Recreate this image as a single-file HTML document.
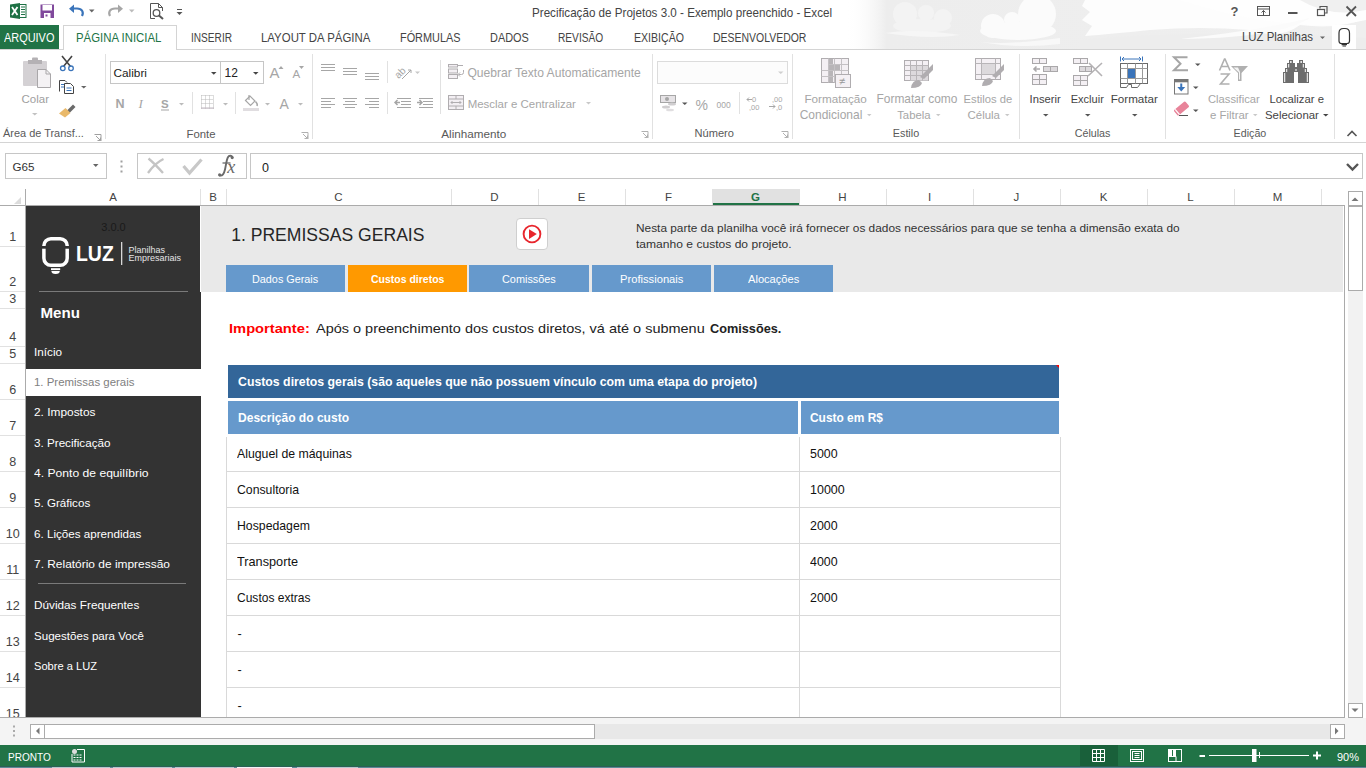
<!DOCTYPE html>
<html><head><meta charset="utf-8">
<style>
*{margin:0;padding:0;box-sizing:border-box}
html,body{width:1366px;height:768px;overflow:hidden;background:#fff;font-family:"Liberation Sans",sans-serif;color:#444}
.a{position:absolute}
.t{position:absolute;white-space:pre;line-height:1;font-style:normal;font-size:12px;color:#444}
.gl{color:#595959}
.dis{color:#a6a6a6}
.ch2{font-size:11.5px}
.rn{font-size:11.5px;color:#444}
.dt{color:#111;font-size:12.3px}
svg{position:absolute;overflow:visible}

</style></head><body>
<!-- TITLE BAR background clouds -->
<svg style="left:0;top:0" width="1366" height="50">
 <defs>
  <linearGradient id="cg" x1="0" x2="1" y1="0" y2="0">
   <stop offset="0" stop-color="#fff" stop-opacity="0"></stop>
   <stop offset="0.08" stop-color="#ededed"></stop>
   <stop offset="1" stop-color="#efefef"></stop>
  </linearGradient>
 </defs>
 <rect x="845" y="0" width="521" height="49" fill="url(#cg)"></rect>
 <g fill="#f3f3f3">
  <circle cx="905" cy="14" r="12"></circle><circle cx="926" cy="13" r="8"></circle><circle cx="943" cy="18" r="9"></circle>
  <ellipse cx="922" cy="26" rx="29" ry="7"></ellipse>
 </g>
 <path d="M885 33 Q915 28 960 35 Q930 40 885 33Z" fill="#f6f6f6"></path>
 <g fill="#fbfbfb">
  <circle cx="1037" cy="14" r="19"></circle><circle cx="1012" cy="20" r="8"></circle><circle cx="993" cy="26" r="12"></circle>
  <ellipse cx="1018" cy="31" rx="38" ry="9"></ellipse>
 </g>
 <path d="M980 42 Q1010 45 1060 38 L1060 44 Q1020 49 980 42Z" fill="#f8f8f8"></path>
 <path d="M1085 0 H1366 V18 Q1340 30 1300 25 Q1280 40 1250 30 Q1200 26 1150 30 Q1110 34 1085 36 L1092 26 L1082 20 L1090 12 L1082 6 Z" fill="#fdfdfd"></path>
 <path d="M1180 0 H1310 Q1330 8 1366 0 V20 Q1330 28 1300 24 Q1250 22 1180 0Z" fill="#fefefe"></path>
 <path d="M1300 0 Q1330 18 1366 10 V0Z" fill="#f0f0f0"></path>
 <path d="M1080 40 Q1200 28 1366 38 V49 H1080 Z" fill="#ededed"></path>
 <path d="M1180 39 Q1260 30 1310 18 Q1280 38 1180 39Z" fill="#fbfbfb"></path>
</svg>
<!-- TABS -->
<div class="a" style="left:0;top:25px;width:59px;height:25px;background:#217346"></div>
<div class="a" style="left:63px;top:25px;width:114px;height:25px;background:#fff;border:1px solid #d4d4d4;border-bottom:none"></div>
<div class="a" style="left:1332px;top:25px;width:24px;height:24px;background:#fff"></div>

<!-- RIBBON -->
<div class="a" style="left:0;top:49px;width:1366px;height:1px;background:#d4d4d4"></div>
<div class="a" style="left:64px;top:49px;width:112px;height:1px;background:#fff"></div>
<div class="a" style="left:0;top:142px;width:1366px;height:1px;background:#d4d4d4"></div>
<div class="a" style="left:105px;top:54px;width:1px;height:85px;background:#e1e1e1"></div>
<div class="a" style="left:312px;top:54px;width:1px;height:85px;background:#e1e1e1"></div>
<div class="a" style="left:652px;top:54px;width:1px;height:85px;background:#e1e1e1"></div>
<div class="a" style="left:792px;top:54px;width:1px;height:85px;background:#e1e1e1"></div>
<div class="a" style="left:1019px;top:54px;width:1px;height:85px;background:#e1e1e1"></div>
<div class="a" style="left:1165px;top:54px;width:1px;height:85px;background:#e1e1e1"></div>
<div class="a" style="left:1334px;top:54px;width:1px;height:85px;background:#e1e1e1"></div>
<!-- font boxes -->
<div class="a" style="left:110px;top:61px;width:111px;height:23px;border:1px solid #c6c6c6"></div>
<div class="a" style="left:220px;top:61px;width:44px;height:23px;border:1px solid #c6c6c6"></div>
<div class="a" style="left:657px;top:61px;width:131px;height:23px;border:1px solid #dcdcdc;background:#fcfcfc"></div>
<!-- small separators -->
<div class="a" style="left:192px;top:92px;width:1px;height:22px;background:#e1e1e1"></div>
<div class="a" style="left:235px;top:92px;width:1px;height:22px;background:#e1e1e1"></div>
<div class="a" style="left:387px;top:61px;width:1px;height:22px;background:#e1e1e1"></div>
<div class="a" style="left:387px;top:92px;width:1px;height:22px;background:#e1e1e1"></div>
<div class="a" style="left:440px;top:60px;width:1px;height:54px;background:#e1e1e1"></div>
<div class="a" style="left:739px;top:92px;width:1px;height:22px;background:#e1e1e1"></div>

<!-- FORMULA BAR -->
<div class="a" style="left:5px;top:153px;width:102px;height:26px;border:1px solid #c6c6c6"></div>
<div class="a" style="left:137px;top:153px;width:110px;height:26px;border:1px solid #c6c6c6"></div>
<div class="a" style="left:250px;top:153px;width:1113px;height:26px;border:1px solid #c6c6c6"></div>

<!-- COLUMN HEADER -->
<div class="a" style="left:0;top:189px;width:1345px;height:17px;background:#fff"></div>
<div class="a" style="left:712px;top:189px;width:88px;height:16px;background:#e1e1e1"></div>
<div class="a" style="left:712px;top:203px;width:88px;height:2px;background:#217346"></div>
<div class="a" style="left:0;top:205px;width:1345px;height:1px;background:#ababab"></div>
<div class="a" style="left:200px;top:189px;width:1px;height:16px;background:#e1e1e1"></div>
<div class="a" style="left:226px;top:189px;width:1px;height:16px;background:#e1e1e1"></div>
<div class="a" style="left:451px;top:189px;width:1px;height:16px;background:#e1e1e1"></div>
<div class="a" style="left:538px;top:189px;width:1px;height:16px;background:#e1e1e1"></div>
<div class="a" style="left:625px;top:189px;width:1px;height:16px;background:#e1e1e1"></div>
<div class="a" style="left:712px;top:189px;width:1px;height:16px;background:#e1e1e1"></div>
<div class="a" style="left:799px;top:189px;width:1px;height:16px;background:#e1e1e1"></div>
<div class="a" style="left:886px;top:189px;width:1px;height:16px;background:#e1e1e1"></div>
<div class="a" style="left:973px;top:189px;width:1px;height:16px;background:#e1e1e1"></div>
<div class="a" style="left:1060px;top:189px;width:1px;height:16px;background:#e1e1e1"></div>
<div class="a" style="left:1147px;top:189px;width:1px;height:16px;background:#e1e1e1"></div>
<div class="a" style="left:1234px;top:189px;width:1px;height:16px;background:#e1e1e1"></div>
<div class="a" style="left:1321px;top:189px;width:1px;height:16px;background:#e1e1e1"></div>


<!-- ROW HEADER -->
<div class="a" style="left:25px;top:189px;width:1px;height:529px;background:#ababab"></div>
<div class="a" style="left:0;top:246px;width:25px;height:1px;background:#e1e1e1"></div>
<div class="a" style="left:0;top:291px;width:25px;height:1px;background:#e1e1e1"></div>
<div class="a" style="left:0;top:308px;width:25px;height:1px;background:#e1e1e1"></div>
<div class="a" style="left:0;top:346px;width:25px;height:1px;background:#e1e1e1"></div>
<div class="a" style="left:0;top:363px;width:25px;height:1px;background:#e1e1e1"></div>
<div class="a" style="left:0;top:399px;width:25px;height:1px;background:#e1e1e1"></div>
<div class="a" style="left:0;top:435px;width:25px;height:1px;background:#e1e1e1"></div>
<div class="a" style="left:0;top:471px;width:25px;height:1px;background:#e1e1e1"></div>
<div class="a" style="left:0;top:507px;width:25px;height:1px;background:#e1e1e1"></div>
<div class="a" style="left:0;top:543px;width:25px;height:1px;background:#e1e1e1"></div>
<div class="a" style="left:0;top:579px;width:25px;height:1px;background:#e1e1e1"></div>
<div class="a" style="left:0;top:615px;width:25px;height:1px;background:#e1e1e1"></div>
<div class="a" style="left:0;top:651px;width:25px;height:1px;background:#e1e1e1"></div>
<div class="a" style="left:0;top:687px;width:25px;height:1px;background:#e1e1e1"></div>


<!-- SHEET -->
<div class="a" style="left:26px;top:206px;width:1318px;height:511px;background:#fff;overflow:hidden">
 
</div>
<div class="a" style="left:1344px;top:205px;width:1px;height:513px;background:#ababab"></div>
<div class="a" style="left:0;top:717px;width:1345px;height:1px;background:#ababab"></div>

<!-- SCROLLBARS -->
<div class="a" style="left:1345px;top:189px;width:21px;height:529px;background:#fff"></div>
<div class="a" style="left:1348px;top:291px;width:15px;height:412px;background:#f2f2f2"></div>
<div class="a" style="left:1348px;top:191px;width:15px;height:15px;background:#fff;border:1px solid #ababab"></div>
<div class="a" style="left:1348px;top:206px;width:15px;height:85px;background:#fff;border:1px solid #ababab"></div>
<div class="a" style="left:1348px;top:703px;width:15px;height:15px;background:#fff;border:1px solid #ababab"></div>
<div class="a" style="left:0;top:718px;width:1366px;height:27px;background:#f4f4f4"></div>
<div class="a" style="left:30px;top:724px;width:1315px;height:15px;background:#e8e8e8"></div>
<div class="a" style="left:30px;top:724px;width:15px;height:15px;background:#fff;border:1px solid #ababab"></div>
<div class="a" style="left:44px;top:724px;width:551px;height:15px;background:#fff;border:1px solid #ababab"></div>
<div class="a" style="left:1330px;top:724px;width:15px;height:15px;background:#fff;border:1px solid #ababab"></div>

<!-- STATUS BAR -->
<div class="a" style="left:0;top:745px;width:1366px;height:21px;background:#217346"></div>
<div class="a" style="left:0;top:766px;width:1366px;height:1px;background:#2c5f55"></div>
<div class="a" style="left:0;top:767px;width:1366px;height:1px;background:#5a8c96"></div>
<div class="a" style="left:52px;top:767px;width:58px;height:1px;background:#b4c9cd"></div>
<div class="a" style="left:113px;top:767px;width:59px;height:1px;background:#b4c9cd"></div>
<div class="a" style="left:175px;top:767px;width:59px;height:1px;background:#b4c9cd"></div>
<div class="a" style="left:237px;top:767px;width:55px;height:1px;background:#f0f4f4"></div>
<div class="a" style="left:297px;top:767px;width:61px;height:1px;background:#b4c9cd"></div>

<!-- SHEET OBJECTS (page coords, clipped) -->
<div class="a" style="left:0;top:0;width:1366px;height:768px;clip-path:inset(206px 22px 51px 26px)">
 <!-- menu panel -->
 <div class="a" style="left:26px;top:206px;width:174px;height:86px;background:#333"></div>
 <div class="a" style="left:26px;top:292px;width:175px;height:426px;background:#333"></div>
 <!-- gray band -->
 <div class="a" style="left:201px;top:206px;width:1142px;height:86px;background:#e9e9e9"></div>
 <!-- menu separators -->
 <div class="a" style="left:39px;top:291px;width:149px;height:1px;background:#7a7a7a"></div>
 <div class="a" style="left:38px;top:583px;width:148px;height:1px;background:#7a7a7a"></div>
 <!-- menu highlight -->
 <div class="a" style="left:26px;top:369px;width:175px;height:27px;background:#fff"></div>
 <!-- logo -->
 <svg style="left:0;top:0" width="1366" height="768">
  <rect x="43.9" y="238.7" width="23.3" height="26.5" rx="7" ry="7" fill="none" stroke="#fff" stroke-width="3.5"></rect>
  <rect x="40" y="246" width="6" height="2.7" fill="#333"></rect>
  <rect x="65" y="246" width="6" height="2.7" fill="#333"></rect>
  <rect x="51" y="268.2" width="9.2" height="1.9" fill="#fff"></rect>
  <path d="M51.4 271 L59.8 271 A4.2 3 0 0 1 51.4 271 Z" fill="#fff"></path>
  <rect x="121" y="242" width="1.3" height="23" fill="#d8d8d8"></rect>
 </svg>
 <!-- tabs -->
 <div class="a" style="left:226px;top:265px;width:119px;height:27px;background:#6699cc"></div>
 <div class="a" style="left:348px;top:265px;width:119px;height:27px;background:#ff9900"></div>
 <div class="a" style="left:469px;top:265px;width:120px;height:27px;background:#6699cc"></div>
 <div class="a" style="left:592px;top:265px;width:119px;height:27px;background:#6699cc"></div>
 <div class="a" style="left:714px;top:265px;width:119px;height:27px;background:#6699cc"></div>
 <!-- play button -->
 <div class="a" style="left:516px;top:218px;width:32px;height:32px;background:#fff;border:1px solid #cfcfcf;border-radius:4px"></div>
 <svg style="left:0;top:0" width="1366" height="768">
  <circle cx="532" cy="234" r="8.4" fill="none" stroke="#e8262d" stroke-width="1.9"></circle>
  <path d="M529 229.2 L536.8 234.1 L529 239 Z" fill="#e8262d"></path>
 </svg>
 <!-- table -->
 <div class="a" style="left:228px;top:365px;width:831px;height:33px;background:#336699"></div>
 <div class="a" style="left:1056px;top:365px;width:3px;height:3px;background:#f00;clip-path:polygon(0 0,100% 0,100% 100%)"></div>
 <div class="a" style="left:228px;top:401px;width:570px;height:33px;background:#6699cc"></div>
 <div class="a" style="left:801px;top:401px;width:258px;height:33px;background:#6699cc"></div>
 <div class="a" style="left:226px;top:471px;width:835px;height:1px;background:#d9d9d9"></div>
<div class="a" style="left:226px;top:507px;width:835px;height:1px;background:#d9d9d9"></div>
<div class="a" style="left:226px;top:543px;width:835px;height:1px;background:#d9d9d9"></div>
<div class="a" style="left:226px;top:579px;width:835px;height:1px;background:#d9d9d9"></div>
<div class="a" style="left:226px;top:615px;width:835px;height:1px;background:#d9d9d9"></div>
<div class="a" style="left:226px;top:651px;width:835px;height:1px;background:#d9d9d9"></div>
<div class="a" style="left:226px;top:687px;width:835px;height:1px;background:#d9d9d9"></div>
<div class="a" style="left:226px;top:437px;width:1px;height:290px;background:#d9d9d9"></div>
<div class="a" style="left:799px;top:437px;width:1px;height:290px;background:#d9d9d9"></div>
<div class="a" style="left:1060px;top:437px;width:1px;height:290px;background:#d9d9d9"></div>

</div>

<svg style="left:0;top:0" width="1366" height="768"><!-- QUICK ACCESS -->
<path d="M10 4.5 L20 3 L20 19 L10 17.5 Z" fill="#1e7145"></path>
<rect x="19.5" y="4.5" width="6.5" height="13" fill="#fff" stroke="#1e7145" stroke-width="1"></rect>
<path d="M21 7h4M21 9.5h4M21 12h4M21 14.5h4" stroke="#1e7145" stroke-width="1"></path>
<path d="M12 7 L17.5 15 M17.5 7 L12 15" stroke="#fff" stroke-width="1.8"></path>
<rect x="40.5" y="4.5" width="13.5" height="13.5" fill="#80499c"></rect>
<rect x="42.5" y="5" width="9.5" height="5.5" fill="#fff"></rect>
<rect x="44" y="13" width="6.5" height="5" fill="#fff"></rect>
<rect x="45.5" y="14.5" width="2" height="2" fill="#80499c"></rect>
<path d="M82 16 C84 12 82 8.5 77 8.5 L72 8.5" fill="none" stroke="#3a74ba" stroke-width="2.2"></path>
<path d="M69 8.7 L74 4.5 L74 13 Z" fill="#3a74ba"></path>
<path d="M89 9.5h5.5l-2.75 3z" fill="#666"></path>
<path d="M110 16 C108 12 110 8.5 115 8.5 L120 8.5" fill="none" stroke="#a6a6a6" stroke-width="2.2"></path>
<path d="M123 8.7 L118 4.5 L118 13 Z" fill="#a6a6a6"></path>
<path d="M129 9.5h5.5l-2.75 3z" fill="#bbb"></path>
<path d="M150.5 18.5 V3.5 H158.5 L162.5 7.5 V11" fill="none" stroke="#555" stroke-width="1"></path>
<path d="M158.5 3.5 V7.5 H162.5" fill="none" stroke="#555" stroke-width="1"></path>
<path d="M150.5 18.5 H155" fill="none" stroke="#555" stroke-width="1"></path>
<circle cx="156.5" cy="13" r="3.3" fill="none" stroke="#555" stroke-width="1.3"></circle>
<path d="M159 15.5 L163 19" stroke="#555" stroke-width="2"></path>
<rect x="177" y="9" width="5" height="1" fill="#555"></rect>
<path d="M176.5 12h6l-3 3z" fill="#555"></path>

<!-- WINDOW CONTROLS -->
<text x="1230.5" y="16" font-family="Liberation Sans" font-weight="bold" font-size="13" fill="#555">?</text>
<rect x="1257.5" y="6.5" width="12" height="9" fill="none" stroke="#555" stroke-width="1"></rect>
<path d="M1258 9h11" stroke="#555" stroke-width="1"></path>
<path d="M1263.5 15V10.5M1261.5 12.5l2-2l2 2" fill="none" stroke="#555" stroke-width="1"></path>
<rect x="1288" y="12" width="9.5" height="2" fill="#555"></rect>
<rect x="1317.5" y="9.5" width="7" height="6" fill="none" stroke="#555" stroke-width="1.2"></rect>
<path d="M1320 8.5V6.5H1327V13H1325" fill="none" stroke="#555" stroke-width="1.2"></path>
<path d="M1346.5 6.5L1356 16M1356 6.5L1346.5 16" stroke="#555" stroke-width="1.8"></path>
<path d="M1320 36.5h5l-2.5 2.5z" fill="#666"></path>
<path d="M1339 41 V33 Q1339 28.5 1343.5 28.5 H1345 Q1349.5 28.5 1349.5 33 V41 Q1349.5 43.5 1347 43.5 H1341.5 Q1339 43.5 1339 41 Z" fill="none" stroke="#333" stroke-width="1.2"></path>
<rect x="1341.5" y="44" width="5.5" height="1.2" fill="#333"></rect>
<rect x="1342.5" y="45.5" width="3.5" height="1" fill="#333"></rect>

<!-- CLIPBOARD GROUP -->
<rect x="23" y="61" width="24" height="25" rx="1" fill="#d4d1d4"></rect>
<rect x="28" y="60" width="14" height="4" fill="#b4b1b4"></rect>
<rect x="32" y="57.5" width="6" height="3" rx="1" fill="#b4b1b4"></rect>
<path d="M37.5 69.5 H46 L50.5 74 V87.5 H37.5 Z" fill="#f4f2f4" stroke="#a9a7a9" stroke-width="1"></path>
<path d="M46 69.5 V74 H50.5" fill="none" stroke="#a9a7a9" stroke-width="1"></path>
<path d="M32 113h5.5l-2.75 2.5z" fill="#c2c2c2"></path>
<path d="M62 56 L70.5 66.5 M72 56 L63.5 66.5" stroke="#444" stroke-width="1.6"></path>
<circle cx="62.8" cy="68.3" r="2.3" fill="none" stroke="#3a74ba" stroke-width="1.3"></circle>
<circle cx="71" cy="68.3" r="2.3" fill="none" stroke="#3a74ba" stroke-width="1.3"></circle>
<path d="M59.5 91.5 V80.5 H65 L67 82.5" fill="none" stroke="#444" stroke-width="1"></path>
<path d="M64.5 83.5 H70.5 L73.5 86.5 V93.5 H64.5 Z" fill="#fff" stroke="#444" stroke-width="1"></path>
<path d="M61 84.5h3M61 87h3M66.5 88h5M66.5 90.5h5" stroke="#3a74ba" stroke-width="1"></path>
<path d="M81 86h5.5l-2.75 2.5z" fill="#666"></path>
<path d="M67 110.5 L73 104.5 L75.5 107 L69.5 113 Z" fill="#6a6a6a"></path>
<path d="M59 113.5 L65.5 108 L70.5 113 L65 117.5 Z" fill="#e9b96b"></path>
<path d="M94.5 134.5h6.5v6.5" fill="none" stroke="#a0a0a0" stroke-width="1"></path>
<path d="M96 136l4.5 4.5M97.5 140.5h3v-3" fill="none" stroke="#a0a0a0" stroke-width="1"></path>

<!-- FONT GROUP -->
<path d="M211 72h5.5l-2.75 2.8z" fill="#444"></path>
<path d="M253 72h5.5l-2.75 2.8z" fill="#444"></path>
<text x="269.5" y="78" font-family="Liberation Sans" font-size="15" fill="#a6a6a6">A</text>
<path d="M278.5 69h5l-2.5-3z" fill="#a6a6a6"></path>
<text x="292.5" y="78" font-family="Liberation Sans" font-size="11.5" fill="#a6a6a6">A</text>
<path d="M299 66h5l-2.5 3z" fill="#a6a6a6"></path>
<text x="115.5" y="108" font-family="Liberation Sans" font-weight="bold" font-size="12.5" fill="#a6a6a6">N</text>
<text x="138.5" y="108" font-family="Liberation Serif" font-style="italic" font-size="13" fill="#a6a6a6">I</text>
<text x="161" y="108" font-family="Liberation Sans" font-weight="bold" font-size="11.5" fill="#a6a6a6">S</text>
<rect x="161" y="109.5" width="8" height="1" fill="#a6a6a6"></rect>
<path d="M179 103h5l-2.5 2.5z" fill="#bbb"></path>
<g stroke="#b8b8b8" stroke-width="1" stroke-dasharray="1 1" fill="none">
<path d="M201.5 95.5v13M205.5 95.5v13M209.5 95.5v13M213.5 95.5v13M201.5 95.5h12M201.5 99.5h12M201.5 103.5h12"></path>
</g>
<rect x="201" y="107.5" width="13" height="1.2" fill="#c0b8c0"></rect>
<path d="M223 103h5l-2.5 2.5z" fill="#bbb"></path>
<path d="M245.5 100.5 L250 96 L255 101 L250.5 105.5 Z" fill="none" stroke="#a6a6a6" stroke-width="1.2"></path>
<path d="M249 95 V100" stroke="#a6a6a6" stroke-width="1.2"></path>
<path d="M255.5 101.5 Q258 104 257 106" stroke="#a6a6a6" stroke-width="1.5" fill="none"></path>
<rect x="243" y="108" width="16" height="3" fill="#e0dde0"></rect>
<path d="M265 103h5l-2.5 2.5z" fill="#bbb"></path>
<text x="279.5" y="108.5" font-family="Liberation Sans" font-size="14" fill="#a6a6a6">A</text>
<path d="M298 103h5l-2.5 2.5z" fill="#bbb"></path>
<path d="M301.5 132.5h6.5v6.5" fill="none" stroke="#b0b0b0" stroke-width="1"></path>
<path d="M303 134l4.5 4.5M304.5 138.5h3v-3" fill="none" stroke="#b0b0b0" stroke-width="1"></path>
<!-- ALIGNMENT GROUP -->
<g fill="#a6a6a6">
<rect x="321" y="64" width="14" height="1"></rect><rect x="321" y="67" width="14" height="1"></rect><rect x="321" y="70" width="14" height="1"></rect>
<rect x="343" y="68" width="14" height="1"></rect><rect x="343" y="71" width="14" height="1"></rect><rect x="343" y="74" width="14" height="1"></rect>
<rect x="365" y="73" width="14" height="1"></rect><rect x="365" y="76" width="14" height="1"></rect><rect x="365" y="79" width="14" height="1"></rect>
<rect x="321" y="98" width="14" height="1"></rect><rect x="321" y="101" width="10" height="1"></rect><rect x="321" y="104" width="14" height="1"></rect><rect x="321" y="107" width="10" height="1"></rect>
<rect x="343" y="98" width="14" height="1"></rect><rect x="345" y="101" width="10" height="1"></rect><rect x="343" y="104" width="14" height="1"></rect><rect x="345" y="107" width="10" height="1"></rect>
<rect x="365" y="98" width="14" height="1"></rect><rect x="369" y="101" width="10" height="1"></rect><rect x="365" y="104" width="14" height="1"></rect><rect x="369" y="107" width="10" height="1"></rect>
<rect x="397" y="98" width="14" height="1"></rect><rect x="401" y="101" width="10" height="1"></rect><rect x="401" y="104" width="10" height="1"></rect><rect x="397" y="107" width="14" height="1"></rect>
<rect x="419" y="98" width="14" height="1"></rect><rect x="423" y="101" width="10" height="1"></rect><rect x="423" y="104" width="10" height="1"></rect><rect x="419" y="107" width="14" height="1"></rect>
</g>
<path d="M395 102.5h5M397.5 100l-2.5 2.5l2.5 2.5" fill="none" stroke="#a6a6a6" stroke-width="1.5"></path>
<path d="M417 102.5h5M419.5 100l2.5 2.5l-2.5 2.5" fill="none" stroke="#a6a6a6" stroke-width="1.5"></path>
<text x="394" y="76" font-family="Liberation Sans" font-size="10" fill="#a6a6a6" transform="rotate(-45 400 72)">ab</text>
<path d="M402 79 L411 70 M408 70h3v3" fill="none" stroke="#a6a6a6" stroke-width="1"></path>
<path d="M415 71.5h5l-2.5 2.5z" fill="#c8c8c8"></path>
<g fill="#f3eff3" stroke="#b0adb0" stroke-width="1">
<rect x="448.5" y="64.5" width="9" height="2.5"></rect><rect x="448.5" y="69" width="9" height="4"></rect><rect x="448.5" y="74.5" width="9" height="4"></rect>
</g>
<path d="M457 65.5h6M463.5 70v2.5q0 2-2 2h-3M460 72.5l-2 2l2 2" fill="none" stroke="#b0adb0" stroke-width="1"></path>
<rect x="448.5" y="95.5" width="15" height="14" fill="#f3eff3" stroke="#b0adb0" stroke-width="1"></rect>
<path d="M448.5 99h15M448.5 106h15M456 95.5v3.5M456 106v3.5" stroke="#b0adb0" stroke-width="1"></path>
<path d="M451 102.5h10M452.5 101l-1.5 1.5l1.5 1.5M459.5 101l1.5 1.5l-1.5 1.5" fill="none" stroke="#b0adb0" stroke-width="1"></path>
<path d="M586 102h5l-2.5 2.5z" fill="#c8c8c8"></path>
<path d="M641.5 131.5h6.5v6.5" fill="none" stroke="#b0b0b0" stroke-width="1"></path>
<path d="M643 133l4.5 4.5M644.5 137.5h3v-3" fill="none" stroke="#b0b0b0" stroke-width="1"></path>

<!-- NUMBER GROUP -->
<path d="M778 71.5h5.5l-2.75 2.5z" fill="#cfcfcf"></path>
<rect x="660.5" y="95.5" width="15" height="7" fill="#e6e3e6" stroke="#a6a6a6" stroke-width="1"></rect>
<circle cx="667" cy="99" r="2" fill="#a6a6a6"></circle>
<ellipse cx="672" cy="104" rx="4" ry="1.5" fill="#d0ced0"></ellipse>
<ellipse cx="666" cy="107" rx="4" ry="1.5" fill="#d0ced0"></ellipse>
<ellipse cx="670" cy="110" rx="4" ry="1.3" fill="#e0dee0"></ellipse>
<path d="M682 102.5h5.5l-2.75 2.5z" fill="#555"></path>
<text x="695.5" y="109.5" font-family="Liberation Sans" font-size="14" fill="#a6a6a6">%</text>
<text x="716.5" y="107.5" font-family="Liberation Sans" font-size="8.5" fill="#a6a6a6">000</text>
<text x="752" y="102" font-family="Liberation Sans" font-size="7.5" fill="#a6a6a6">0</text>
<text x="749" y="109.5" font-family="Liberation Sans" font-size="7.5" fill="#a6a6a6">,00</text>
<path d="M747 99.5h5M749 97.5l-2 2l2 2" fill="none" stroke="#a6a6a6" stroke-width="1"></path>
<text x="772" y="102" font-family="Liberation Sans" font-size="7.5" fill="#a6a6a6">,00</text>
<text x="776" y="109.5" font-family="Liberation Sans" font-size="7.5" fill="#a6a6a6">,0</text>
<path d="M769 106.5h6M773 104.5l2 2l-2 2" fill="none" stroke="#a6a6a6" stroke-width="1"></path>
<path d="M781.5 131.5h6.5v6.5" fill="none" stroke="#b0b0b0" stroke-width="1"></path>
<path d="M783 133l4.5 4.5M784.5 137.5h3v-3" fill="none" stroke="#b0b0b0" stroke-width="1"></path>

<!-- STYLE GROUP -->
<g stroke="#b0adb0" stroke-width="1" fill="#f4f0f4">
<rect x="821.5" y="58.5" width="27" height="24"></rect>
</g>
<rect x="828" y="59" width="5" height="23" fill="#b8b5b8"></rect>
<rect x="828" y="65" width="12" height="5" fill="#b8b5b8"></rect>
<path d="M828 64.5h20M821.5 70.5h27M821.5 76.5h27M828.5 58.5v24M834.5 58.5v24M841.5 58.5v24" stroke="#c4c1c4" stroke-width="1"></path>
<rect x="835.5" y="74.5" width="15" height="13" fill="#f4f0f4" stroke="#b0adb0" stroke-width="1"></rect>
<text x="839" y="85" font-family="Liberation Sans" font-size="11" fill="#999">≠</text>
<path d="M867 114h4.5l-2.25 2.3z" fill="#c8c8c8"></path>
<rect x="904.5" y="60.5" width="24" height="20" fill="#f4f0f4" stroke="#b0adb0" stroke-width="1"></rect>
<rect x="910" y="65.5" width="18" height="15" fill="#dcd9dc"></rect>
<path d="M904.5 65.5h24M904.5 70.5h24M904.5 75.5h24M910.5 60.5v20M916.5 60.5v20M922.5 60.5v20" stroke="#b8b5b8" stroke-width="1"></path>
<path d="M920 77 L931 66 L933 64 L933 70 L924 79 Z" fill="#b0adb0"></path>
<path d="M911 88 Q912 80 919 80 L922 83 Q921 88 911 88 Z" fill="#b0adb0"></path>
<path d="M936 114h4.5l-2.25 2.3z" fill="#c8c8c8"></path>
<rect x="975.5" y="58.5" width="25" height="21" fill="#f4f0f4" stroke="#b0adb0" stroke-width="1"></rect>
<rect x="981" y="63.5" width="14" height="11" fill="#dcd9dc"></rect>
<path d="M975.5 63.5h25M975.5 74.5h25M981.5 58.5v21M995.5 58.5v21" stroke="#b8b5b8" stroke-width="1"></path>
<path d="M992 76 L1002 66 L1004 64 L1004 70 L996 78 Z" fill="#b0adb0"></path>
<path d="M982 86 Q983 78 990 78 L993 81 Q992 86 982 86 Z" fill="#b0adb0"></path>
<path d="M1005 114h4.5l-2.25 2.3z" fill="#c8c8c8"></path>
<!-- CELLS GROUP -->
<g fill="#f4f0f4" stroke="#aaa8aa" stroke-width="1">
<rect x="1032.5" y="58.5" width="14" height="5"></rect>
<rect x="1032.5" y="74.5" width="14" height="10"></rect>
<rect x="1073.5" y="58.5" width="14" height="5"></rect>
<rect x="1073.5" y="75.5" width="14" height="10"></rect>
</g>
<g fill="#dcd9dc" stroke="#aaa8aa" stroke-width="1">
<rect x="1043.5" y="66.5" width="14" height="5"></rect>
<rect x="1079.5" y="66.5" width="12" height="5"></rect>
</g>
<path d="M1039.5 58.5v5M1039.5 74.5v10M1032.5 79.5h14M1050.5 66.5v5M1080.5 58.5v5M1080.5 75.5v10M1073.5 80.5h14M1085.5 66.5v5" stroke="#aaa8aa" stroke-width="1"></path>
<path d="M1034 69h6M1036.5 66.5l-2.5 2.5l2.5 2.5" fill="none" stroke="#aaa8aa" stroke-width="1.6"></path>
<path d="M1089 63 L1102 76 M1102 63 L1088 76" stroke="#b4b2b4" stroke-width="1.6"></path>
<path d="M1043 114h5.5l-2.75 2.5z" fill="#555"></path>
<path d="M1085 114h5.5l-2.75 2.5z" fill="#555"></path>
<path d="M1132 114h5.5l-2.75 2.5z" fill="#555"></path>
<path d="M1120.5 56.5v5M1142.5 56.5v5M1122 59h19M1124 57l-2 2l2 2M1139 57l2 2l-2 2" fill="none" stroke="#3a74ba" stroke-width="1"></path>
<rect x="1120.5" y="63.5" width="27" height="20" fill="#fff" stroke="#6a6a6a" stroke-width="1"></rect>
<path d="M1120.5 68.5h27M1120.5 78.5h27M1127.5 63.5v20M1135.5 63.5v20M1142.5 63.5v20" stroke="#9a9a9a" stroke-width="1"></path>
<rect x="1128" y="69" width="7" height="9" fill="#3a74ba"></rect>
<path d="M1120.5 83.5v4h6l2-3h3v3h6l3-4" fill="none" stroke="#6a6a6a" stroke-width="1"></path>

<!-- EDITING GROUP -->
<path d="M1187.5 57.2H1174L1180.5 63.8L1174 70.2H1188" fill="none" stroke="#a6a6a6" stroke-width="2"></path>
<path d="M1195 63.5h5.5l-2.75 2.5z" fill="#555"></path>
<rect x="1174.5" y="79.5" width="13.5" height="14.5" fill="#fff" stroke="#777" stroke-width="1"></rect>
<rect x="1174.5" y="79.5" width="13.5" height="2.8" fill="#777"></rect>
<path d="M1181.25 83.5v5" fill="none" stroke="#3a74ba" stroke-width="2"></path>
<path d="M1177.3 87 L1185.2 87 L1181.25 91.5 Z" fill="#3a74ba"></path>
<path d="M1193 86.5h5.5l-2.75 2.5z" fill="#555"></path>
<g transform="rotate(-40 1181.5 108.5)">
<rect x="1174" y="105" width="15" height="7" rx="1.2" fill="#e8849a"></rect>
<rect x="1175.5" y="105" width="1.2" height="7" fill="#fff"></rect>
</g>
<rect x="1179" y="115" width="9" height="1" fill="#555"></rect>
<path d="M1193 109.5h5.5l-2.75 2.5z" fill="#555"></path>
<path d="M1219.5 70.5 L1224.5 59 L1225 59 L1230 70.5 M1221.2 66.5 H1228.3" fill="none" stroke="#b0b0b0" stroke-width="1.6"></path>
<path d="M1220.5 74 H1229 L1220.5 84 H1229.5" fill="none" stroke="#b0b0b0" stroke-width="1.6"></path>
<path d="M1231 66 H1248 L1241.5 73 V81 H1238 V73 Z" fill="#b0b0b0"></path>
<path d="M1233.5 67.5 L1238 67.5 L1240 72 V79.5 H1239 V72.5 Z" fill="#f4f4f4"></path>
<path d="M1253 114h4.5l-2.25 2.3z" fill="#c8c8c8"></path>
<g fill="#6d6d6d">
<path d="M1283 83 V72 H1285 V68 H1287 V63 H1289 V60 H1293 V63 H1295 V72 H1294 V83 Z"></path>
<path d="M1309 83 V72 H1307 V68 H1305 V63 H1303 V60 H1299 V63 H1297 V72 H1298 V83 Z"></path>
<rect x="1294" y="67" width="4" height="5"></rect>
</g>
<g fill="#fff">
<rect x="1284.2" y="73" width="1" height="9"></rect><rect x="1286.2" y="69" width="1" height="3"></rect><rect x="1288.2" y="64" width="1" height="3.5"></rect><rect x="1290.2" y="61" width="1.3" height="2"></rect>
<rect x="1306.8" y="73" width="1" height="9"></rect><rect x="1304.8" y="69" width="1" height="3"></rect><rect x="1302.8" y="64" width="1" height="3.5"></rect><rect x="1300.5" y="61" width="1.3" height="2"></rect>
<rect x="1295" y="69.5" width="2" height="1"></rect>
</g>
<path d="M1323 114h5.5l-2.75 2.5z" fill="#444"></path>
<path d="M1347.5 136l4.5-4.5l4.5 4.5" fill="none" stroke="#555" stroke-width="1.6"></path>

<!-- FORMULA BAR -->
<path d="M93 164h5.5l-2.75 3z" fill="#666"></path>
<rect x="120.5" y="160.5" width="2" height="2" fill="#a0a0a0"></rect>
<rect x="120.5" y="165.5" width="2" height="2" fill="#a0a0a0"></rect>
<rect x="120.5" y="170.5" width="2" height="2" fill="#a0a0a0"></rect>
<path d="M148.5 158.5 Q155 164 163 173 M163.5 159 Q155 163 148 173" fill="none" stroke="#c4c4c4" stroke-width="2.3"></path>
<path d="M183.5 166 L189.5 173 L201.5 159.5" fill="none" stroke="#c8c8c8" stroke-width="3.2"></path>
<path d="M232.5 157.2 C231.5 155.2 229 155.3 227.8 157.5 C226.6 159.8 226 165 225 169.5 C224 174 222.5 176.2 219.5 175.5" fill="none" stroke="#6a6a6a" stroke-width="1.9"></path>
<circle cx="232.2" cy="157.6" r="1.6" fill="#6a6a6a"></circle><circle cx="219.6" cy="174.8" r="1.6" fill="#6a6a6a"></circle>
<path d="M222.5 163 H230.5" stroke="#6a6a6a" stroke-width="1.3"></path>
<text x="227.3" y="173" font-family="Liberation Serif" font-style="italic" font-size="18" fill="#666">x</text>
<path d="M1347 164 L1352.5 169.5 L1358 164" fill="none" stroke="#555" stroke-width="2.4"></path>

<!-- CORNER TRIANGLE -->
<path d="M21 197 V204 H14 Z" fill="#dcdcdc"></path>

<!-- SCROLL ARROWS -->
<path d="M1351.5 201 h7 l-3.5 -3.5z" fill="#777"></path>
<path d="M1351.5 708.5 h7 l-3.5 3.5z" fill="#777"></path>
<path d="M39.5 727.5 v7 l-3.5 -3.5z" fill="#777"></path>
<path d="M1335 727.5 v7 l3.5 -3.5z" fill="#777"></path>
<rect x="13" y="725.5" width="2" height="2" fill="#aaa"></rect>
<rect x="13" y="730" width="2" height="2" fill="#aaa"></rect>
<rect x="13" y="734.5" width="2" height="2" fill="#aaa"></rect>

<!-- STATUS BAR -->
<circle cx="74.5" cy="751.5" r="2.5" fill="#ddd"></circle>
<path d="M77 749.5h7.5v12.5h-12.5v-8" fill="none" stroke="#fff" stroke-width="1"></path>
<path d="M73.5 755h2M76.5 755h2M79.5 755h2M73.5 757.5h2M76.5 757.5h2M79.5 757.5h2M73.5 760h2M76.5 760h2M79.5 760h2" stroke="#fff" stroke-width="1.2"></path>
</svg><div class="a" style="left:1080px;top:745px;width:38px;height:21px;background:#19603a"></div>
<svg style="left:0;top:0" width="1366" height="768"><path d="M1092.5 749.5h12v12h-12zM1096.5 749.5v12M1100.5 749.5v12M1092.5 753.5h12M1092.5 757.5h12" fill="none" stroke="#fff" stroke-width="1"></path>
<rect x="1130.5" y="749.5" width="13" height="12" fill="none" stroke="#fff" stroke-width="1"></rect>
<rect x="1132.5" y="751.5" width="9" height="8" fill="none" stroke="#fff" stroke-width="1"></rect>
<path d="M1134.5 753.5h5M1134.5 755.5h5M1134.5 757.5h5" stroke="#fff" stroke-width="1"></path>
<rect x="1168.5" y="749.5" width="13" height="12" fill="none" stroke="#fff" stroke-width="1"></rect>
<rect x="1169" y="750" width="3" height="6" fill="#fff"></rect>
<rect x="1173" y="750" width="3" height="6" fill="#fff"></rect>
<path d="M1168.5 756.5h7.5v5" fill="none" stroke="#fff" stroke-width="1"></path>
<rect x="1199.5" y="755" width="5.5" height="2" fill="#fff"></rect>
<rect x="1209" y="755" width="100" height="1" fill="#fff"></rect>
<rect x="1252" y="749" width="4.5" height="13" fill="#fff"></rect>
<rect x="1259" y="752" width="1" height="6" fill="#fff"></rect>
<path d="M1313 755.5h8M1317 751.5v8" stroke="#fff" stroke-width="2"></path>
</svg>

<i class="t" style="color: rgb(68, 68, 68); font-size: 12.5698px; transform-origin: 0px 0px; transform: scaleX(0.927088); top: 7px; left: 532px;">Precificação de Projetos 3.0 - Exemplo preenchido - Excel</i>
<i class="t" style="color: rgb(255, 255, 255); font-size: 12.5698px; transform-origin: 0px 0px; transform: scaleX(0.870842); top: 32px; left: 4.1px;">ARQUIVO</i>
<i class="t" style="color: rgb(33, 115, 70); font-size: 12.5698px; transform-origin: 0px 0px; transform: scaleX(0.907154); top: 32px; left: 76.4px;">PÁGINA INICIAL</i>
<i class="t" style="font-size: 12.5698px; transform-origin: 0px 0px; transform: scaleX(0.805402); top: 32px; left: 191px;">INSERIR</i>
<i class="t" style="font-size: 12.5698px; transform-origin: 0px 0px; transform: scaleX(0.910363); top: 32px; left: 261px;">LAYOUT DA PÁGINA</i>
<i class="t" style="font-size: 12.5698px; transform-origin: 0px 0px; transform: scaleX(0.867772); top: 32px; left: 400px;">FÓRMULAS</i>
<i class="t" style="font-size: 12.5698px; transform-origin: 0px 0px; transform: scaleX(0.869468); top: 32px; left: 490px;">DADOS</i>
<i class="t" style="font-size: 12.5698px; transform-origin: 0px 0px; transform: scaleX(0.810308); top: 32px; left: 558px;">REVISÃO</i>
<i class="t" style="font-size: 12.5698px; transform-origin: 0px 0px; transform: scaleX(0.843437); top: 32px; left: 633.5px;">EXIBIÇÃO</i>
<i class="t" style="font-size: 12.5698px; transform-origin: 0px 0px; transform: scaleX(0.833696); top: 32px; left: 713.3px;">DESENVOLVEDOR</i>
<i class="t" style="font-size: 12.5698px; transform-origin: 0px 0px; transform: scaleX(0.908982); top: 31px; left: 1242px;">LUZ Planilhas</i>

<i class="t" style="color: rgb(160, 160, 160); font-size: 11.5033px; top: 94px; left: 21.5px;">Colar</i>
<i class="t gl" style="font-size: 10.956px; top: 128px; left: 3px;">Área de Transf...</i>
<i class="t" style="color: rgb(34, 34, 34); font-size: 11.8181px; top: 68px; left: 113.5px;">Calibri</i>
<i class="t" style="color: rgb(34, 34, 34); font-size: 12px; top: 67px; left: 224.5px;">12</i>
<i class="t gl" style="font-size: 11.3401px; top: 129px; left: 186.5px;">Fonte</i>
<i class="t dis" style="font-size: 12.1204px; top: 67px; left: 467.4px;">Quebrar Texto Automaticamente</i>
<i class="t dis" style="font-size: 11.4628px; top: 99px; left: 467.7px;">Mesclar e Centralizar</i>
<i class="t gl" style="font-size: 11.6909px; top: 128px; left: 441.3px;">Alinhamento</i>
<i class="t gl" style="font-size: 11.104px; top: 128px; left: 694.5px;">Número</i>
<i class="t dis" style="font-size: 11.6943px; top: 93px; left: 804.4px;">Formatação</i>
<i class="t dis" style="font-size: 11.9964px; top: 109px; left: 799.7px;">Condicional</i>
<i class="t dis" style="font-size: 11.947px; top: 94px; left: 876.5px;">Formatar como</i>
<i class="t dis" style="font-size: 11.33px; top: 110px; left: 897.2px;">Tabela</i>
<i class="t dis" style="font-size: 11.2317px; top: 94px; left: 963.6px;">Estilos de</i>
<i class="t dis" style="font-size: 11.4601px; top: 110px; left: 967.5px;">Célula</i>
<i class="t gl" style="font-size: 10.7962px; top: 128px; left: 892.8px;">Estilo</i>
<i class="t" style="font-size: 11.2285px; top: 94px; left: 1029.6px;">Inserir</i>
<i class="t" style="font-size: 11.0619px; top: 94px; left: 1070.7px;">Excluir</i>
<i class="t" style="font-size: 11.658px; top: 93px; left: 1110.7px;">Formatar</i>
<i class="t gl" style="font-size: 10.7316px; top: 128px; left: 1074.7px;">Células</i>
<i class="t dis" style="font-size: 11.2316px; top: 94px; left: 1208px;">Classificar</i>
<i class="t dis" style="font-size: 11.4182px; top: 110px; left: 1210px;">e Filtrar</i>
<i class="t" style="font-size: 11.2905px; top: 94px; left: 1269.4px;">Localizar e</i>
<i class="t" style="font-size: 11.4279px; top: 110px; left: 1265px;">Selecionar</i>
<i class="t gl" style="font-size: 10.6912px; top: 128px; left: 1233.6px;">Edição</i>

<i class="t" style="color: rgb(51, 51, 51); font-size: 11.6364px; top: 161px; left: 12.5px;">G65</i>
<i class="t" style="color: rgb(34, 34, 34); font-size: 12.5607px; top: 162px; left: 262px;">0</i>
<i class="t ch2" style="color: rgb(68, 68, 68); top: 192px; left: 109.164px;">A</i>
<i class="t ch2" style="color: rgb(68, 68, 68); top: 192px; left: 209.164px;">B</i>
<i class="t ch2" style="color: rgb(68, 68, 68); top: 192px; left: 334.344px;">C</i>
<i class="t ch2" style="color: rgb(68, 68, 68); top: 192px; left: 490.344px;">D</i>
<i class="t ch2" style="color: rgb(68, 68, 68); top: 192px; left: 577.664px;">E</i>
<i class="t ch2" style="color: rgb(68, 68, 68); top: 192px; left: 664.984px;">F</i>
<i class="t ch2" style="color: rgb(33, 115, 70); font-weight: bold; top: 192px; left: 751.023px;">G</i>
<i class="t ch2" style="color: rgb(68, 68, 68); top: 192px; left: 838.344px;">H</i>
<i class="t ch2" style="color: rgb(68, 68, 68); top: 192px; left: 927.898px;">I</i>
<i class="t ch2" style="color: rgb(68, 68, 68); top: 192px; left: 1013.62px;">J</i>
<i class="t ch2" style="color: rgb(68, 68, 68); top: 192px; left: 1099.66px;">K</i>
<i class="t ch2" style="color: rgb(68, 68, 68); top: 192px; left: 1187.3px;">L</i>
<i class="t ch2" style="color: rgb(68, 68, 68); top: 192px; left: 1272.7px;">M</i>
<div class="a" style="left:0;top:206px;width:25px;height:511px;overflow:hidden">
<i class="t rn" style="font-size: 12.5698px; top: 25px; left: 9.30781px;">1</i>
<i class="t rn" style="font-size: 12.5698px; top: 70px; left: 9.30781px;">2</i>
<i class="t rn" style="font-size: 12.5698px; top: 87px; left: 9.30781px;">3</i>
<i class="t rn" style="font-size: 12.5698px; top: 125px; left: 9.30781px;">4</i>
<i class="t rn" style="font-size: 12.5698px; top: 142px; left: 9.30781px;">5</i>
<i class="t rn" style="font-size: 12.5698px; top: 178px; left: 9.30781px;">6</i>
<i class="t rn" style="font-size: 12.5698px; top: 214px; left: 9.30781px;">7</i>
<i class="t rn" style="font-size: 12.5698px; top: 250px; left: 9.30781px;">8</i>
<i class="t rn" style="font-size: 12.5698px; top: 286px; left: 9.30781px;">9</i>
<i class="t rn" style="font-size: 12.5698px; top: 322px; left: 5.81562px;">10</i>
<i class="t rn" style="font-size: 12.5698px; top: 358px; left: 6.28437px;">11</i>
<i class="t rn" style="font-size: 12.5698px; top: 394px; left: 5.81562px;">12</i>
<i class="t rn" style="font-size: 12.5698px; top: 430px; left: 5.81562px;">13</i>
<i class="t rn" style="font-size: 12.5698px; top: 466px; left: 5.81562px;">14</i>
<i class="t rn" style="font-size: 12.5698px; top: 502px; left: 5.81562px;">15</i>
</div>

<i class="t" style="color: rgb(38, 38, 38); font-size: 17.5763px; top: 227px; left: 231.2px;">1. PREMISSAS GERAIS</i>
<i class="t" style="color: rgb(51, 51, 51); font-size: 11.1732px; transform-origin: 0px 0px; transform: scaleX(1.06263); top: 223px; left: 635.7px;">Nesta parte da planilha você irá fornecer os dados necessários para que se tenha a dimensão exata do</i>
<i class="t" style="color: rgb(51, 51, 51); font-size: 11.1732px; transform-origin: 0px 0px; transform: scaleX(1.08207); top: 239px; left: 635.7px;">tamanho e custos do projeto.</i>
<i class="t" style="color: rgb(255, 255, 255); font-size: 11.1732px; transform-origin: 0px 0px; transform: scaleX(0.970408); top: 274px; left: 252.4px;">Dados Gerais</i>
<i class="t" style="color: rgb(255, 255, 255); font-weight: bold; font-size: 11.1732px; transform-origin: 0px 0px; transform: scaleX(0.939708); top: 274px; left: 370.6px;">Custos diretos</i>
<i class="t" style="color: rgb(255, 255, 255); font-size: 11.1732px; transform-origin: 0px 0px; transform: scaleX(0.974858); top: 274px; left: 501.8px;">Comissões</i>
<i class="t" style="color: rgb(255, 255, 255); font-size: 11.1732px; transform-origin: 0px 0px; transform: scaleX(1.00237); top: 274px; left: 619.6px;">Profissionais</i>
<i class="t" style="color: rgb(255, 255, 255); font-size: 11.1732px; transform-origin: 0px 0px; transform: scaleX(0.996419); top: 274px; left: 747.7px;">Alocações</i>

<i class="t" style="color: rgb(255, 0, 0); font-weight: bold; font-size: 12.5698px; transform-origin: 0px 0px; transform: scaleX(1.17075); top: 323px; left: 229.2px;">Importante:</i>
<i class="t" style="color: rgb(34, 34, 34); font-size: 12.5698px; transform-origin: 0px 0px; transform: scaleX(1.15384); top: 323px; left: 315.5px;">Após o preenchimento dos custos diretos, vá até o submenu</i>
<i class="t" style="color: rgb(34, 34, 34); font-weight: bold; font-size: 12.5698px; transform-origin: 0px 0px; transform: scaleX(1.01224); top: 323px; left: 709.5px;">Comissões.</i>

<i class="t" style="color: rgb(255, 255, 255); font-weight: bold; font-size: 12.5698px; transform-origin: 0px 0px; transform: scaleX(0.980749); top: 376px; left: 237.6px;">Custos diretos gerais (são aqueles que não possuem vínculo com uma etapa do projeto)</i>
<i class="t" style="color: rgb(255, 255, 255); font-weight: bold; font-size: 12.5698px; transform-origin: 0px 0px; transform: scaleX(0.958963); top: 412px; left: 237.6px;">Descrição do custo</i>
<i class="t" style="color: rgb(255, 255, 255); font-weight: bold; font-size: 12.5698px; transform-origin: 0px 0px; transform: scaleX(0.950418); top: 412px; left: 810.1px;">Custo em R$</i>
<div class="a" style="left:0;top:0;width:1344px;height:717px;overflow:hidden">
<i class="t dt" style="font-size: 12.5698px; transform-origin: 0px 0px; transform: scaleX(0.979627); top: 448px; left: 237.4px;">Aluguel de máquinas</i>
<i class="t dt" style="font-size: 12.5698px; transform-origin: 0px 0px; transform: scaleX(0.988472); top: 448px; left: 810.1px;">5000</i>
<i class="t dt" style="font-size: 12.5698px; transform-origin: 0px 0px; transform: scaleX(0.976859); top: 484px; left: 237.4px;">Consultoria</i>
<i class="t dt" style="font-size: 12.5698px; transform-origin: 0px 0px; transform: scaleX(0.994536); top: 484px; left: 810.1px;">10000</i>
<i class="t dt" style="font-size: 12.5698px; transform-origin: 0px 0px; transform: scaleX(0.97802); top: 520px; left: 237.4px;">Hospedagem</i>
<i class="t dt" style="font-size: 12.5698px; transform-origin: 0px 0px; transform: scaleX(0.988472); top: 520px; left: 810.1px;">2000</i>
<i class="t dt" style="font-size: 12.5698px; transform-origin: 0px 0px; transform: scaleX(1.01297); top: 556px; left: 237.4px;">Transporte</i>
<i class="t dt" style="font-size: 12.5698px; transform-origin: 0px 0px; transform: scaleX(0.988472); top: 556px; left: 810.1px;">4000</i>
<i class="t dt" style="font-size: 12.5698px; transform-origin: 0px 0px; transform: scaleX(0.95824); top: 592px; left: 237.4px;">Custos extras</i>
<i class="t dt" style="font-size: 12.5698px; transform-origin: 0px 0px; transform: scaleX(0.988472); top: 592px; left: 810.1px;">2000</i>
<i class="t dt" style="font-size: 12.5698px; top: 628px; left: 237.4px;">-</i>
<i class="t dt" style="font-size: 12.5698px; top: 664px; left: 237.4px;">-</i>
<i class="t dt" style="font-size: 12.5698px; top: 700px; left: 237.4px;">-</i>
</div>

<i class="t" style="color: rgb(26, 26, 26); font-size: 11px; top: 222px; left: 101.266px;">3.0.0</i>
<i class="t" style="color: rgb(255, 255, 255); font-weight: bold; font-size: 21.3687px; transform-origin: 0px 0px; transform: scaleX(0.910158); top: 244px; left: 75.8px;">LUZ</i>
<i class="t" style="color: rgb(230, 230, 230); font-size: 8.96766px; top: 246px; left: 128.6px;">Planilhas</i>
<i class="t" style="color: rgb(230, 230, 230); font-size: 8.98018px; top: 254px; left: 128.6px;">Empresariais</i>
<i class="t" style="color: rgb(255, 255, 255); font-weight: bold; font-size: 15.1256px; top: 305px; left: 40.5px;">Menu</i>
<i class="t" style="color: rgb(255, 255, 255); font-size: 11.1732px; transform-origin: 0px 0px; transform: scaleX(1.04979); top: 347px; left: 33.7px;">Início</i>
<i class="t" style="color: rgb(128, 128, 128); font-size: 11.1732px; transform-origin: 0px 0px; transform: scaleX(1.02584); top: 377px; left: 33.7px;">1. Premissas gerais</i>
<i class="t" style="color: rgb(255, 255, 255); font-size: 11.1732px; transform-origin: 0px 0px; transform: scaleX(1.06638); top: 407px; left: 33.7px;">2. Impostos</i>
<i class="t" style="color: rgb(255, 255, 255); font-size: 11.1732px; transform-origin: 0px 0px; transform: scaleX(1.04548); top: 438px; left: 33.7px;">3. Precificação</i>
<i class="t" style="color: rgb(255, 255, 255); font-size: 11.1732px; transform-origin: 0px 0px; transform: scaleX(1.08674); top: 468px; left: 33.7px;">4. Ponto de equilíbrio</i>
<i class="t" style="color: rgb(255, 255, 255); font-size: 11.1732px; transform-origin: 0px 0px; transform: scaleX(1.04164); top: 498px; left: 33.7px;">5. Gráficos</i>
<i class="t" style="color: rgb(255, 255, 255); font-size: 11.1732px; transform-origin: 0px 0px; transform: scaleX(1.04303); top: 529px; left: 33.7px;">6. Lições aprendidas</i>
<i class="t" style="color: rgb(255, 255, 255); font-size: 11.1732px; transform-origin: 0px 0px; transform: scaleX(1.06903); top: 559px; left: 33.7px;">7. Relatório de impressão</i>
<i class="t" style="color: rgb(255, 255, 255); font-size: 11.1732px; transform-origin: 0px 0px; transform: scaleX(1.05465); top: 600px; left: 33.7px;">Dúvidas Frequentes</i>
<i class="t" style="color: rgb(255, 255, 255); font-size: 11.1732px; transform-origin: 0px 0px; transform: scaleX(1.03712); top: 631px; left: 33.7px;">Sugestões para Você</i>
<i class="t" style="color: rgb(255, 255, 255); font-size: 11.1732px; transform-origin: 0px 0px; transform: scaleX(0.996047); top: 661px; left: 33.7px;">Sobre a LUZ</i>

<i class="t" style="color: rgb(255, 255, 255); font-size: 10.0929px; top: 753px; left: 8px;">PRONTO</i>
<i class="t" style="color: rgb(255, 255, 255); font-size: 10.9857px; top: 752px; left: 1337px;">90%</i>


</body></html>
